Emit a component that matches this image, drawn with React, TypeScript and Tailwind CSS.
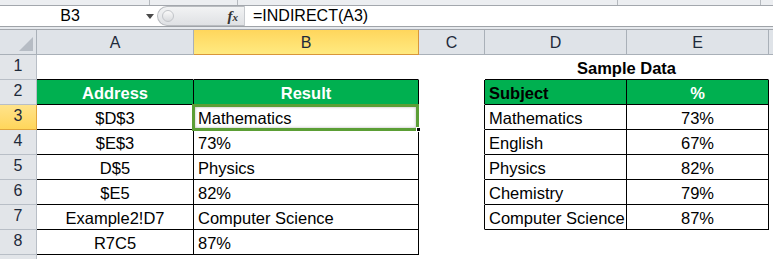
import React from 'react';

type CellProps = {
  children?: React.ReactNode;
  right?: boolean;
  bottom?: boolean;
  bg?: string;
  center?: boolean;
  clip?: boolean;
  className?: string;
};

// one worksheet cell, gridlines off so borders are white unless part of a table
function Cell({ children, right, bottom, bg = 'bg-white', center, clip = true, className = '' }: CellProps) {
  return (
    <div
      className={`relative flex items-end whitespace-nowrap border-r border-b px-[4px] pb-[1px] leading-[20px] ${bg} ${
        clip ? 'overflow-hidden' : 'overflow-visible'
      } ${right ? 'border-r-black' : 'border-r-white'} ${bottom ? 'border-b-black' : 'border-b-white'} ${
        center ? 'justify-center' : 'justify-start'
      } ${className}`}
    >
      {children}
    </div>
  );
}

function RowHead({ n, active }: { n?: number; active?: boolean }) {
  return (
    <div
      className={`flex items-center justify-center border-r border-b pb-[2px] text-[16px] text-[#1e2a3a] ${
        active
          ? 'border-r-[#e0a53c] border-b-[#e0a53c] bg-gradient-to-b from-[#ffe38a] to-[#ffd65a]'
          : 'border-r-[#b8bec6] border-b-[#b8bec6] bg-[#e2e5e9]'
      }`}
    >
      {n}
    </div>
  );
}

function ColHead({ label, active }: { label: string; active?: boolean }) {
  return (
    <div
      className={`flex items-center justify-center border-r border-b pt-[1px] text-[16px] text-[#1e2a3a] ${
        active
          ? 'border-r-[#d9963a] border-b-[#d9963a] bg-gradient-to-b from-[#ffd65c] to-[#ffea80]'
          : 'border-r-[#a9b0b8] border-b-[#a9b0b8] bg-[#dfe3e8]'
      }`}
    >
      {label}
    </div>
  );
}

const table1 = [
  ['$D$3', 'Mathematics'],
  ['$E$3', '73%'],
  ['D$5', 'Physics'],
  ['$E5', '82%'],
  ['Example2!D7', 'Computer Science'],
  ['R7C5', '87%'],
];

const table2 = [
  ['Mathematics', '73%'],
  ['English', '67%'],
  ['Physics', '82%'],
  ['Chemistry', '79%'],
  ['Computer Science', '87%'],
];

export default function App() {
  return (
    <div className="h-[259px] w-[773px] overflow-hidden bg-white font-['Liberation_Sans',Arial,sans-serif] text-[16.5px] text-black">
      {/* ribbon edge */}
      <div className="flex h-[6px] border-b border-[#a3a7ad] bg-[#eceef1]">
        <div className="w-[150px] border-r border-[#b5b9be]" />
        <div className="w-[88px] border-r border-[#b5b9be]" />
        <div className="w-[380px] border-r border-[#b5b9be]" />
        <div className="w-[143px] border-r border-[#b5b9be]" />
      </div>

      {/* formula bar */}
      <div className="flex h-[21px] border-b border-[#9fa3a8]">
        <div className="flex w-[157px] items-center bg-white">
          <span className="w-[140px] text-center text-[16px] leading-none">B3</span>
          <svg width="8" height="5" viewBox="0 0 8 5" className="ml-[6px]">
            <polygon points="0,0 8,0 4,5" fill="#4a4a4a" />
          </svg>
        </div>
        <div className="flex w-[87px] items-center bg-white">
          <div className="flex h-full flex-1 items-center rounded-l-full border border-r-0 border-[#b9bcc0] bg-gradient-to-b from-[#f2f3f4] to-[#dfe1e4]">
            <div className="ml-[4px] h-[12px] w-[12px] rounded-full border border-[#c2c5c9] bg-gradient-to-b from-[#fafafa] to-[#d9dbde]" />
            <span className="ml-auto mr-[6px] font-['Liberation_Serif',serif] text-[15px] font-bold italic leading-none text-[#333]">
              f<span className="text-[11px]">x</span>
            </span>
          </div>
        </div>
        <div className="flex flex-1 items-center border-l border-[#c8cbcf] bg-white pl-[8px] text-[16px] leading-none">
          =INDIRECT(A3)
        </div>
      </div>
      <div className="h-[3px] border-b border-[#a3a7ad] bg-[#e6e9ed]" />

      {/* grid */}
      <div className="grid grid-cols-[37px_157px_225px_66px_142px_142px_1fr] grid-rows-[25px_repeat(8,25px)_25px]">
        {/* column headers */}
        <div className="relative border-r border-b border-r-[#a9b0b8] border-b-[#a9b0b8] bg-[#dfe3e8]">
          <svg width="14" height="14" viewBox="0 0 14 14" className="absolute bottom-[3px] right-[3px]">
            <polygon points="14,0 14,14 0,14" fill="#b6bcc4" />
          </svg>
        </div>
        <ColHead label="A" />
        <ColHead label="B" active />
        <ColHead label="C" />
        <ColHead label="D" />
        <ColHead label="E" />
        <div className="border-b border-b-[#a9b0b8] bg-[#dfe3e8]" />

        {/* row 1 */}
        <RowHead n={1} />
        <Cell bottom />
        <Cell bottom />
        <Cell />
        <Cell bottom center className="col-span-2 font-bold">
          Sample Data
        </Cell>
        <div />

        {/* row 2 headers */}
        <RowHead n={2} />
        <Cell right bottom center bg="bg-[#00b050]" className="font-bold text-white">
          Address
        </Cell>
        <Cell right bottom center bg="bg-[#00b050]" className="font-bold text-white">
          Result
        </Cell>
        <Cell right />
        <Cell right bottom bg="bg-[#00b050]" className="px-[3px] font-bold">
          Subject
        </Cell>
        <Cell right bottom center bg="bg-[#00b050]" className="font-bold text-white">
          %
        </Cell>
        <div />

        {table1.map((r, i) => {
          const t2 = table2[i];
          return (
            <React.Fragment key={i}>
              <RowHead n={i + 3} active={i === 0} />
              <Cell right bottom center>
                {r[0]}
              </Cell>
              <Cell right bottom clip={i !== 0} className={i === 0 ? 'z-10' : ''}>
                {r[1]}
                {i === 0 && (
                  <>
                    <div className="pointer-events-none absolute -left-[2px] -right-[1px] -top-[1px] -bottom-[2px] border-[3px] border-[#5b9e35] shadow-[inset_0_0_3px_rgba(0,0,0,0.3)]" />
                    <div className="absolute -bottom-[3px] -right-[3px] h-[5px] w-[5px] border border-white bg-black" />
                  </>
                )}
              </Cell>
              <Cell right={!!t2} />
              {t2 ? (
                <>
                  <Cell right bottom className="px-[3px]">
                    {t2[0]}
                  </Cell>
                  <Cell right bottom center>
                    {t2[1]}
                  </Cell>
                </>
              ) : (
                <>
                  <Cell />
                  <Cell />
                </>
              )}
              <div />
            </React.Fragment>
          );
        })}

        <RowHead />
      </div>
    </div>
  );
}
